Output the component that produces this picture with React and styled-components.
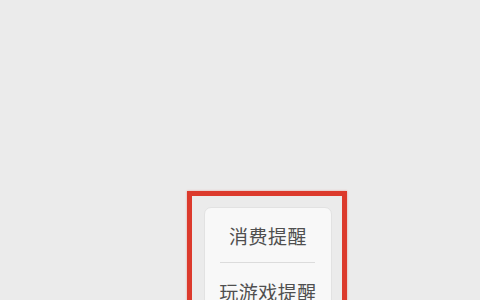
import React from 'react'
import styled, { createGlobalStyle } from 'styled-components'

const Global = createGlobalStyle`
  html, body {
    margin: 0;
    padding: 0;
    background: #ebebeb;
    overflow: hidden;
  }
  body {
    font-family: "Noto Sans CJK SC", "Noto Sans", sans-serif;
  }
`

const Page = styled.div`
  width: 480px;
  height: 300px;
  overflow: hidden;
  padding: 191px 0 0 187px;
  box-sizing: border-box;
`

const Highlight = styled.div`
  width: 160px;
  box-sizing: border-box;
  border: 5px solid #dc3a2c;
  padding: 11px 10px 20px 12px;
  box-shadow: 0 0 2px rgba(220, 58, 44, 0.4);
`

const Menu = styled.div`
  width: 128px;
  background: #f8f8f8;
  border: 1px solid #e2e2e2;
  border-radius: 7px;
  box-sizing: border-box;
`

const Item = styled.div`
  height: ${p => p.h}px;
  display: flex;
  align-items: center;
  justify-content: center;
  white-space: nowrap;
  font-size: 19px;
  color: #4f4f4f;
  letter-spacing: 0.5px;
`

const Divider = styled.div`
  height: 1px;
  margin: 0 16px 0 15px;
  background: #dcdcdc;
`

export default function App() {
  return (
    <Page>
      <Global />
      <Highlight>
        <Menu>
          <Item h={54}>消费提醒</Item>
          <Divider />
          <Item h={56}>玩游戏提醒</Item>
        </Menu>
      </Highlight>
    </Page>
  )
}
